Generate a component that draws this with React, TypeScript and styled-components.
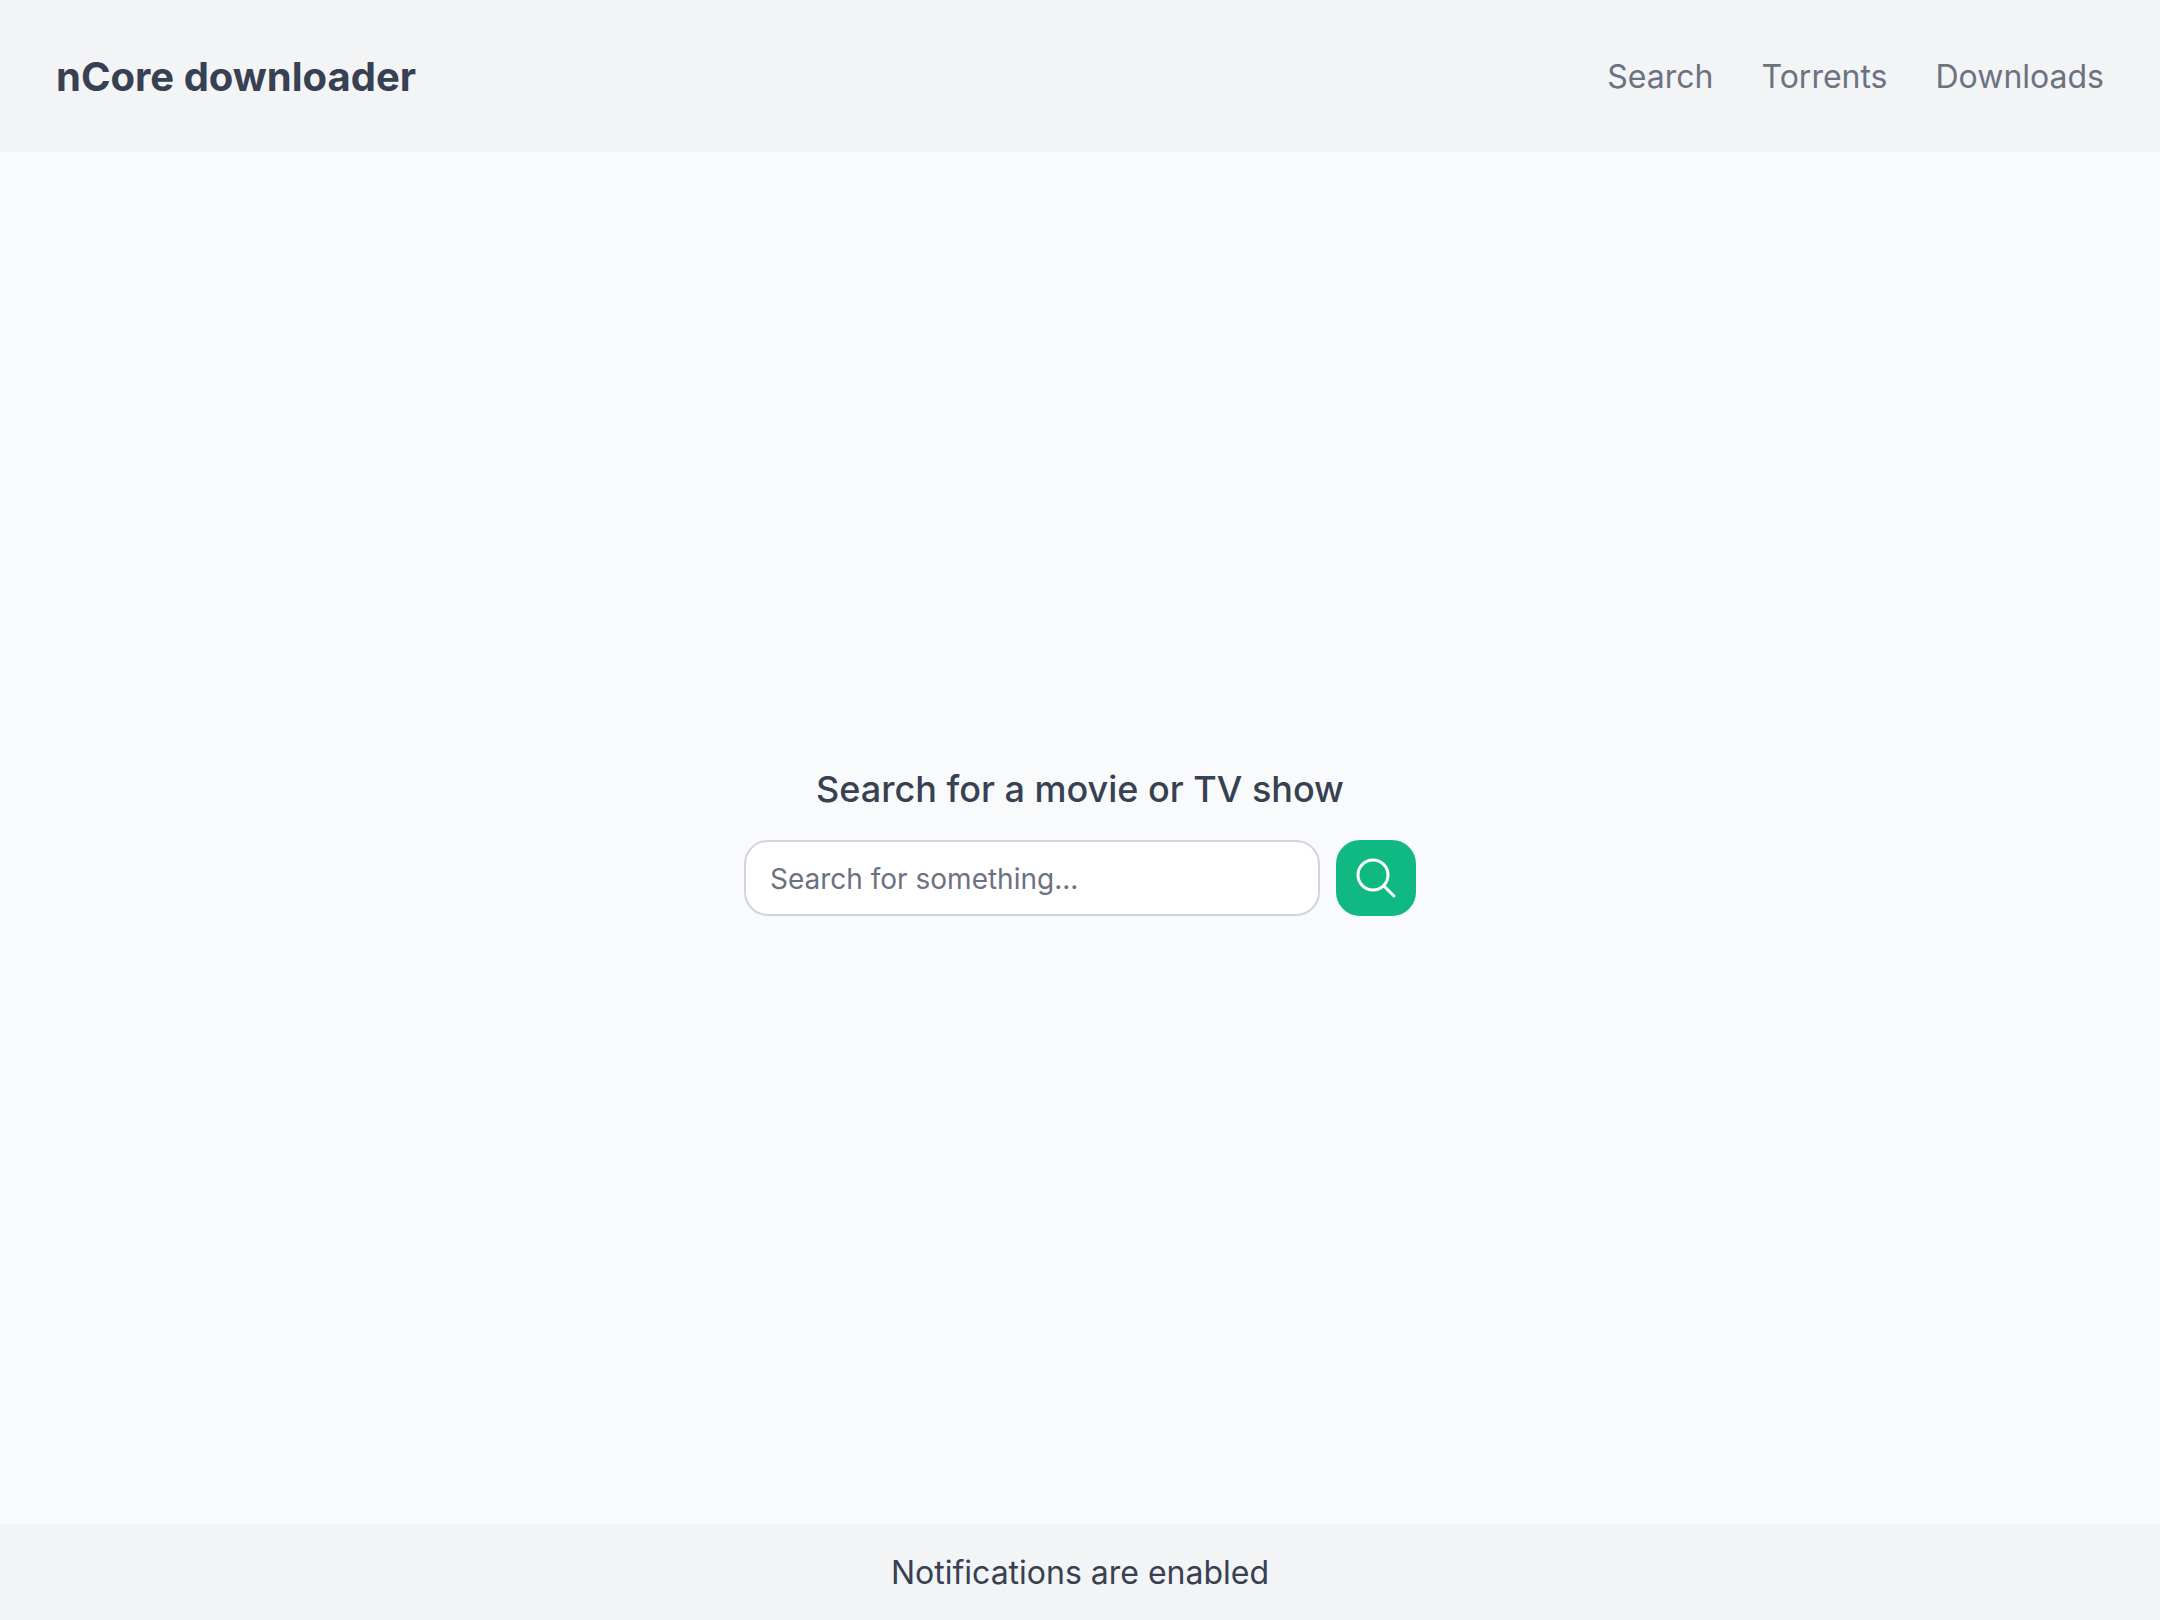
import React, { useState } from "react";
import styled, { createGlobalStyle } from "styled-components";

const GlobalStyle = createGlobalStyle`
  *, *::before, *::after { box-sizing: border-box; }
  body {
    margin: 0;
    background: #f9fafc;
    color: #374151;
    font-family: Inter, "Liberation Sans", sans-serif;
    -webkit-font-smoothing: antialiased;
  }
`;

const Page = styled.div`
  min-height: 100vh;
  display: flex;
  flex-direction: column;
`;

const Header = styled.header`
  display: flex;
  align-items: center;
  justify-content: space-between;
  padding: 49px 56px 47px;
  background: #f3f4f6;
`;

const Title = styled.h1`
  margin: 0;
  font-size: 40px;
  line-height: 56px;
  font-weight: 700;
`;

const Nav = styled.nav`
  display: flex;
  gap: 48px;
`;

const NavLink = styled.a`
  font-size: 32px;
  line-height: 48px;
  color: #6b7280;
  text-decoration: none;
`;

const Main = styled.main`
  flex: 1;
  display: flex;
  align-items: center;
  justify-content: center;
`;

const SearchForm = styled.form`
  display: flex;
  flex-direction: column;
  gap: 22px;
  width: 100%;
  max-width: 672px;
`;

const Heading = styled.label`
  font-size: 36px;
  line-height: 58px;
  font-weight: 500;
  text-align: center;
`;

const SearchRow = styled.div`
  display: flex;
  gap: 16px;
`;

const SearchInput = styled.input`
  flex: 1;
  min-width: 0;
  padding: 17px 24px 15px;
  border: 2px solid #d1d5db;
  border-radius: 24px;
  background: #ffffff;
  color: #374151;
  font: inherit;
  font-size: 28px;
  line-height: 40px;
  &::placeholder {
    color: #6b7280;
    opacity: 1;
  }
`;

const SearchButton = styled.button`
  display: flex;
  align-items: center;
  padding: 14px 16px;
  border: 0;
  border-radius: 24px;
  background: #10b981;
  color: #ffffff;
  cursor: pointer;
`;

const Icon = styled.svg`
  display: block;
  width: 48px;
  height: 48px;
`;

const Footer = styled.footer`
  padding: 25px 24px 23px;
  background: #f3f4f6;
  font-size: 32px;
  line-height: 48px;
  text-align: center;
`;

const links = ["Search", "Torrents", "Downloads"];

export default function App() {
  const [query, setQuery] = useState("");

  return (
    <>
      <GlobalStyle />
      <Page>
        <Header>
          <Title>nCore downloader</Title>
          <Nav>
            {links.map((name) => (
              <NavLink key={name} href={`#${name.toLowerCase()}`}>
                {name}
              </NavLink>
            ))}
          </Nav>
        </Header>
        <Main>
          <SearchForm onSubmit={(event) => event.preventDefault()}>
            <Heading htmlFor="query">Search for a movie or TV show</Heading>
            <SearchRow>
              <SearchInput
                id="query"
                type="text"
                placeholder="Search for something..."
                value={query}
                onChange={(event) => setQuery(event.target.value)}
              />
              <SearchButton type="submit" aria-label="Search">
                <Icon
                  viewBox="0 0 24 24"
                  fill="none"
                  stroke="currentColor"
                  strokeWidth={1.5}
                  strokeLinecap="round"
                  strokeLinejoin="round"
                  aria-hidden="true"
                >
                  <path d="m21 21-5.197-5.197m0 0A7.5 7.5 0 1 0 5.196 5.196a7.5 7.5 0 0 0 10.607 10.607Z" />
                </Icon>
              </SearchButton>
            </SearchRow>
          </SearchForm>
        </Main>
        <Footer>Notifications are enabled</Footer>
      </Page>
    </>
  );
}
